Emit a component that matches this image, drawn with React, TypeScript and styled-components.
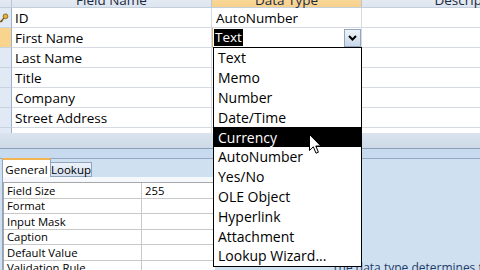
import React from "react";
import styled, { createGlobalStyle, css } from "styled-components";

const Global = createGlobalStyle`
  html, body { margin: 0; padding: 0; }
  body {
    width: 480px; height: 270px; overflow: hidden;
    background: #cfe0f1;
    font-family: "Open Sans", "Noto Sans", sans-serif;
  }
`;

const Screen = styled.div`
  position: relative;
  width: 480px;
  height: 270px;
  overflow: hidden;
  display: flex;
  flex-direction: column;
  background: #cfe0f1;
`;

const TopPane = styled.div`
  flex: none;
  height: 133px;
  overflow: hidden;
  background: #fff;
`;

const Table = styled.div`
  width: 580px;
  display: grid;
  grid-template-columns: 12px 200px 150px 218px;
  grid-auto-rows: 20px;
  margin-top: -12px;
  font-size: 13.5px;
  color: #000;
`;

const HeaderCell = styled.div<{ $active?: boolean }>`
  box-sizing: border-box;
  display: flex;
  align-items: center;
  justify-content: center;
  padding-top: 4px;
  color: #1b2a3d;
  border-right: 1px solid #b9c7d8;
  border-bottom: 1px solid #c3cfdd;
  background: ${(p) =>
    p.$active
      ? "linear-gradient(#fbe3b0, #f7d08a)"
      : "linear-gradient(#eef2f8, #dde5ef)"};
`;

const Selector = styled.div<{ $current?: boolean }>`
  box-sizing: border-box;
  display: flex;
  align-items: center;
  border-right: 1px solid #9eb1c9;
  border-bottom: 1px solid #c8d3e1;
  background: ${(p) => (p.$current ? "#f9d48d" : "#e1e9f4")};
  overflow: hidden;
`;

const Cell = styled.div<{ $lineRight?: boolean }>`
  box-sizing: border-box;
  display: flex;
  align-items: center;
  padding-left: 3px;
  white-space: nowrap;
  overflow: hidden;
  border-bottom: 1px solid #d6dbe3;
  ${(p) => p.$lineRight && css`border-right: 1px solid #d6dbe3;`}
`;

const LastCell = styled(Cell)`
  align-items: flex-start;
  padding-top: 1px;
`;

const TypeCell = styled(Cell)`
  padding-left: 4px;
`;

const Combo = styled.div`
  box-sizing: border-box;
  display: flex;
  align-items: center;
  padding: 0 0 0 1px;
  border-left: 1px solid #ddb56b;
  border-bottom: 1px solid #d6dbe3;
  border-right: 1px solid #d6dbe3;
  background: #fff;
`;

const Selected = styled.span`
  background: #000;
  color: #fff;
  padding: 0 1px;
  line-height: 17px;
`;

const Spacer = styled.span`
  flex: 1;
`;

const DropButton = styled.div`
  box-sizing: border-box;
  width: 17px;
  height: 18px;
  display: flex;
  align-items: center;
  justify-content: center;
  border: 1px solid #90a6c1;
  background: linear-gradient(#eef3f9, #c9d7e8);
`;

const DropList = styled.div`
  position: absolute;
  left: 213px;
  top: 47px;
  width: 149px;
  box-sizing: border-box;
  border: 1px solid #000;
  background: #fff;
  display: grid;
  grid-auto-rows: 19.8px;
  font-size: 14px;
  z-index: 2;
`;

const Item = styled.div<{ $active?: boolean }>`
  display: flex;
  align-items: center;
  padding-left: 4px;
  white-space: nowrap;
  color: ${(p) => (p.$active ? "#fff" : "#000")};
  background: ${(p) => (p.$active ? "#000" : "transparent")};
`;

const BottomPane = styled.div`
  flex: 1;
  display: flex;
  flex-direction: column;
  min-height: 0;
`;

const Splitter = styled.div`
  flex: none;
  height: 15px;
  background: linear-gradient(#dae4f0, #cdd9e7);
  border-bottom: 1px solid #8a9fb9;
`;

const Band = styled.div`
  flex: none;
  height: 9px;
  background: #c7daee;
  border-bottom: 1px solid #93a8c2;
`;

const Body = styled.div`
  flex: 1;
  display: grid;
  grid-template-columns: 215px 1fr;
  min-height: 0;
`;

const LeftPanel = styled.div`
  display: flex;
  flex-direction: column;
  padding-left: 2px;
  margin-top: -1px;
`;

const Tabs = styled.div`
  display: flex;
  align-items: flex-start;
  height: 19px;
  font-size: 11.5px;
`;

const Tab = styled.div<{ $active?: boolean }>`
  box-sizing: border-box;
  display: flex;
  align-items: center;
  justify-content: center;
  border: 1px solid #8ea4bf;
  ${(p) =>
    p.$active
      ? css`
          width: 49px;
          height: 19px;
          background: #fff;
          border-top: 2px solid #f2b450;
          border-bottom: none;
          padding-top: 1px;
        `
      : css`
          width: 42px;
          height: 15px;
          margin-top: 4px;
          margin-left: -1px;
          background: linear-gradient(#eef3fa, #d3e0f0);
          color: #000;
        `}
`;

const TabPanel = styled.div`
  flex: 1;
  background: #f6f8fb;
  border-left: 1px solid #8ea4bf;
  padding: 5px 0 0 0;
`;

const PropGrid = styled.div`
  display: grid;
  grid-template-columns: 138px 1fr;
  grid-auto-rows: 15.5px;
  border-top: 1px solid #a7a7a7;
  border-left: 1px solid #a7a7a7;
  background: #fff;
  font-size: 11.3px;
`;

const PropCell = styled.div<{ $label?: boolean }>`
  box-sizing: border-box;
  display: flex;
  align-items: center;
  padding-left: 3px;
  white-space: nowrap;
  border-bottom: 1px solid #c8c8c8;
  ${(p) => p.$label && css`border-right: 1px solid #c8c8c8;`}
`;

const HelpArea = styled.div`
  padding: 101px 0 0 117px;
  overflow: hidden;
`;

const HelpText = styled.div`
  font-size: 12px;
  line-height: 15px;
  color: #1d3b66;
  white-space: nowrap;
`;

const Cursor = styled.svg`
  position: absolute;
  left: 309px;
  top: 134px;
  z-index: 3;
`;

const KeyIcon = () => (
  <svg width="10" height="10" viewBox="0 0 10 10" style={{ marginLeft: -1 }}>
    <circle cx="6.5" cy="3.3" r="2.4" fill="#e3b23c" stroke="#7a5a12" strokeWidth="0.8" />
    <path d="M5 5 L1 9 M2 8 L3 9 M3 7 L4 8" stroke="#7a5a12" strokeWidth="1.2" fill="none" />
  </svg>
);

const Chevron = () => (
  <svg width="9" height="6" viewBox="0 0 9 6">
    <path d="M1 1 L4.5 4.5 L8 1" stroke="#000" strokeWidth="2" fill="none" />
  </svg>
);

const fields = ["Last Name", "Title", "Company", "Street Address"];
const types = [
  "Text",
  "Memo",
  "Number",
  "Date/Time",
  "Currency",
  "AutoNumber",
  "Yes/No",
  "OLE Object",
  "Hyperlink",
  "Attachment",
  "Lookup Wizard...",
];
const props: [string, string][] = [
  ["Field Size", "255"],
  ["Format", ""],
  ["Input Mask", ""],
  ["Caption", ""],
  ["Default Value", ""],
  ["Validation Rule", ""],
];

export default function App() {
  return (
    <Screen>
      <Global />
      <TopPane>
        <Table>
          <HeaderCell />
          <HeaderCell>Field Name</HeaderCell>
          <HeaderCell $active>Data Type</HeaderCell>
          <HeaderCell>Description</HeaderCell>

          <Selector>
            <KeyIcon />
          </Selector>
          <Cell $lineRight>ID</Cell>
          <TypeCell $lineRight>AutoNumber</TypeCell>
          <Cell />

          <Selector $current />
          <Cell $lineRight>First Name</Cell>
          <Combo>
            <Selected>Text</Selected>
            <Spacer />
            <DropButton>
              <Chevron />
            </DropButton>
          </Combo>
          <Cell />

          {fields.map((f) => (
            <React.Fragment key={f}>
              <Selector />
              <Cell $lineRight>{f}</Cell>
              <TypeCell $lineRight />
              <Cell />
            </React.Fragment>
          ))}

          <Selector />
          <LastCell $lineRight>City</LastCell>
          <TypeCell $lineRight />
          <Cell />
        </Table>
      </TopPane>

      <BottomPane>
        <Splitter />
        <Band />
        <Body>
          <LeftPanel>
            <Tabs>
              <Tab $active>General</Tab>
              <Tab>Lookup</Tab>
            </Tabs>
            <TabPanel>
              <PropGrid>
                {props.map(([k, v]) => (
                  <React.Fragment key={k}>
                    <PropCell $label>{k}</PropCell>
                    <PropCell>{v}</PropCell>
                  </React.Fragment>
                ))}
              </PropGrid>
            </TabPanel>
          </LeftPanel>
          <HelpArea>
            <HelpText>
              The data type determines the kind of values that users can store in the field.
            </HelpText>
          </HelpArea>
        </Body>
      </BottomPane>

      <DropList>
        {types.map((t) => (
          <Item key={t} $active={t === "Currency"}>
            {t}
          </Item>
        ))}
      </DropList>

      <Cursor width="13" height="21" viewBox="0 0 13 21">
        <path
          d="M0.5 0.5 L0.5 16.5 L4.3 12.8 L7 19.2 L9.4 18.2 L6.8 12 L11.8 12 Z"
          fill="#fff"
          stroke="#000"
          strokeWidth="1"
        />
      </Cursor>
    </Screen>
  );
}
